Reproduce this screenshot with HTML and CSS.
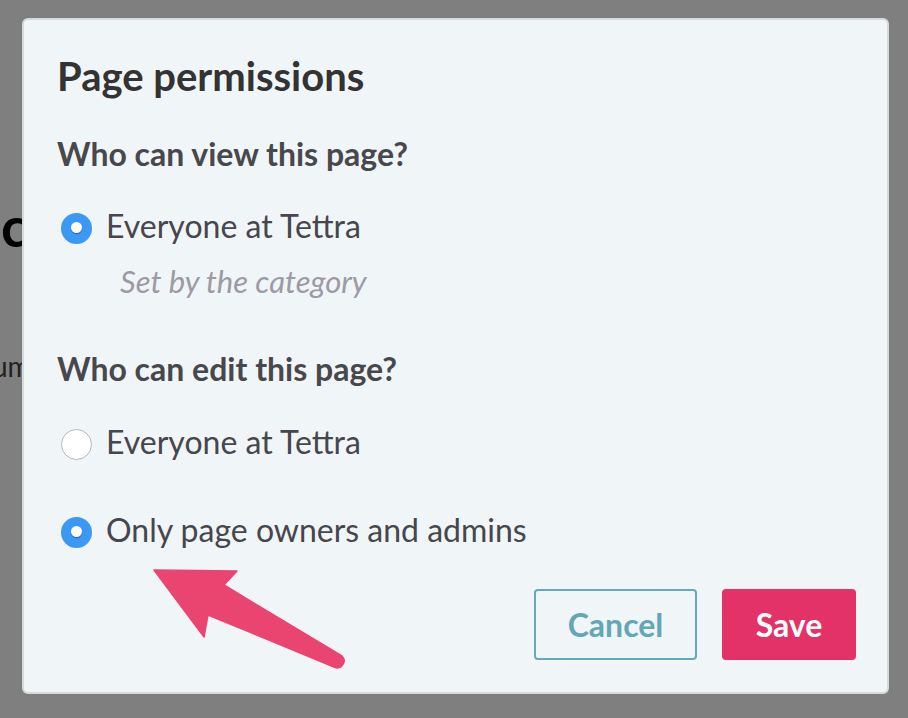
FILE: index.html
```html
<!DOCTYPE html>
<html>
<head>
<meta charset="utf-8">
<link rel="stylesheet" href="styles.css">
</head>
<body>
<div class="page">
  <h1 class="page-title">c</h1>
  <p class="page-text">um</p>
</div>
<div class="modal">
  <h2 class="modal-title">Page permissions</h2>
  <h3 class="section-title view-title">Who can view this page?</h3>
  <div class="option option-view">
    <span class="radio checked"></span>
    <span class="option-label">Everyone at Tettra</span>
  </div>
  <p class="hint">Set by the category</p>
  <h3 class="section-title edit-title">Who can edit this page?</h3>
  <div class="option option-edit1">
    <span class="radio"></span>
    <span class="option-label">Everyone at Tettra</span>
  </div>
  <div class="option option-edit2">
    <span class="radio checked"></span>
    <span class="option-label">Only page owners and admins</span>
  </div>
  <div class="actions">
    <button class="btn btn-cancel">Cancel</button>
    <button class="btn btn-save">Save</button>
  </div>
  <svg class="arrow" width="220" height="120" viewBox="0 0 220 120">
    <path d="M2 2 L85 3 L72 17 L190 88 Q195 93 189 99 Q186 101 182 99 L56 47 L52 69 Z" fill="#ea4570" stroke="#ea4570" stroke-width="1.5" stroke-linejoin="round"/>
  </svg>
</div>
</body>
</html>
```
FILE: styles.css
```css
html, body {
  margin: 0;
  padding: 0;
}
body {
  width: 908px;
  height: 718px;
  background: #7f7f7f;
  font-family: Lato, "Noto Sans", sans-serif;
  position: relative;
  overflow: hidden;
}
.page {
  padding-top: 196px;
  width: 22px;
  overflow: hidden;
  white-space: nowrap;
}
.page-title {
  margin: 0 0 0 1px;
  font-size: 56px;
  line-height: 60px;
  font-weight: 700;
  color: #000;
}
.page-text {
  margin: 94px 0 0 -8px;
  font-size: 28px;
  line-height: 32px;
  color: #222;
}
.modal {
  position: absolute;
  left: 22px;
  top: 18px;
  width: 830px;
  height: 672px;
  background: #f0f5f8;
  border: 2px solid #d6dadd;
  border-radius: 6px;
  padding: 0 0 0 33px;
  box-sizing: content-box;
  display: flex;
  flex-direction: column;
}
.modal-title {
  margin: 36px 0 0 0;
  font-size: 40px;
  line-height: 40px;
  font-weight: 700;
  color: #333333;
}
.section-title {
  margin: 0;
  font-size: 32px;
  line-height: 32px;
  font-weight: 700;
  color: #48484c;
}
.view-title {
  margin-top: 42px;
}
.option {
  display: flex;
  align-items: flex-start;
  gap: 14px;
  margin-left: 4px;
}
.option-view {
  margin-top: 40px;
}
.radio {
  width: 31px;
  height: 31px;
  margin-top: 3px;
  border-radius: 50%;
  box-sizing: border-box;
  background: #ffffff;
  border: 1px solid #b8b8b8;
  position: relative;
  flex: none;
}
.radio.checked {
  background: #3d98f4;
  border: none;
}
.radio.checked::after {
  content: "";
  position: absolute;
  left: 10px;
  top: 9px;
  width: 11px;
  height: 11px;
  border-radius: 50%;
  background: #ffffff;
  box-shadow: 0 1px 1px rgba(0, 0, 0, 0.35);
}
.option-label {
  font-size: 32px;
  line-height: 32px;
  color: #46464c;
}
.hint {
  margin: 22px 0 0 63px;
  font-size: 31px;
  line-height: 31px;
  font-style: italic;
  color: #9e99a4;
}
.edit-title {
  margin-top: 56px;
}
.option-edit1 {
  margin-top: 41px;
}
.option-edit2 {
  margin-top: 54px;
}
.actions {
  display: flex;
  justify-content: flex-end;
  gap: 25px;
  margin-top: 41px;
  padding-right: 31px;
}
.btn {
  font-family: Lato, "Noto Sans", sans-serif;
  font-size: 32px;
  font-weight: 700;
  height: 71px;
  border-radius: 4px;
  box-sizing: border-box;
  cursor: pointer;
  padding: 0;
}
.btn-cancel {
  width: 163px;
  background: transparent;
  border: 2px solid #68a9b8;
  color: #63a7b6;
}
.btn-save {
  width: 134px;
  background: #e23268;
  border: none;
  color: #ffffff;
}
.arrow {
  position: absolute;
  left: 128px;
  top: 548px;
}
```
